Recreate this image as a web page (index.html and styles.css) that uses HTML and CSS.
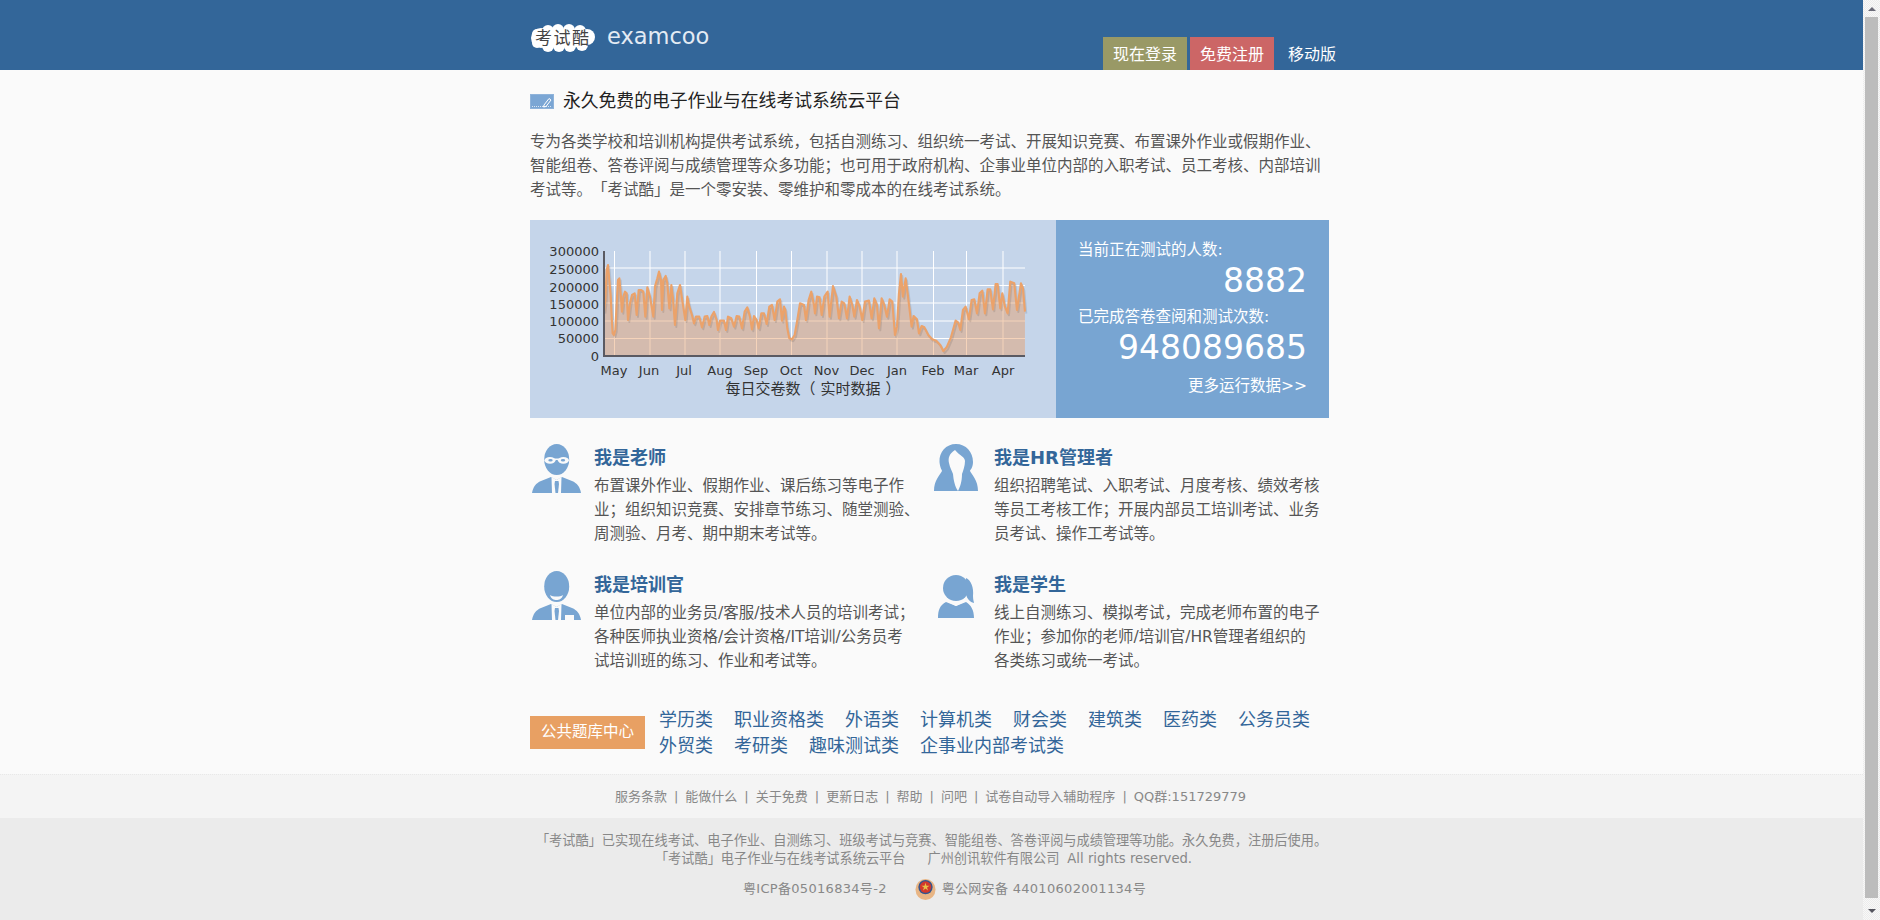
FILE: index.html
```html
<!DOCTYPE html>
<html lang="zh-CN">
<head>
    <meta charset="UTF-8">
    <title>考试酷 examcoo</title>
    <link rel="stylesheet" href="styles.css">
</head>
<body>
<div class="page">
    <div class="header">
        <div class="container header-inner">
            <a class="logo">
                <svg class="logo-cloud" viewBox="0 0 66 30">
                    <g fill="#fff">
                        <circle cx="11" cy="15" r="10"/>
                        <circle cx="7" cy="11" r="5"/>
                        <circle cx="7" cy="20" r="5"/>
                        <circle cx="18" cy="8" r="6"/>
                        <circle cx="28" cy="7" r="6"/>
                        <circle cx="39" cy="7" r="6"/>
                        <circle cx="50" cy="8" r="6"/>
                        <circle cx="57" cy="14" r="8"/>
                        <circle cx="52" cy="22" r="6"/>
                        <circle cx="40" cy="23" r="6"/>
                        <circle cx="29" cy="23" r="6"/>
                        <circle cx="18" cy="23" r="6"/>
                        <rect x="10" y="8" width="46" height="16"/>
                    </g>
                    <text class="logo-cloud-text" x="5" y="21">考试酷</text>
                </svg>
                <span class="logo-text">examcoo</span>
            </a>
            <div class="nav">
                <a class="nav-btn nav-login">现在登录</a>
                <a class="nav-btn nav-reg">免费注册</a>
                <a class="nav-btn">移动版</a>
            </div>
        </div>
    </div>

    <div class="container">
        <div class="title-row">
            <svg class="title-icon" viewBox="0 0 24 15">
                <rect x="0.5" y="0.5" width="23" height="14" fill="#7ba6d4" stroke="#8fb3da"/>
                <path d="M2 12.5H21" stroke="#dbe6f3" stroke-dasharray="1 1" fill="none"/>
                <path d="M14 11l5-6.5 2 1.5-5 6.5-2.5.5z" fill="none" stroke="#fff"/>
            </svg>
            <h1 class="title">永久免费的电子作业与在线考试系统云平台</h1>
        </div>
        <p class="intro">专为各类学校和培训机构提供考试系统，包括自测练习、组织统一考试、开展知识竞赛、布置课外作业或假期作业、智能组卷、答卷评阅与成绩管理等众多功能；也可用于政府机构、企事业单位内部的入职考试、员工考核、内部培训考试等。「考试酷」是一个零安装、零维护和零成本的在线考试系统。</p>

        <div class="stats">
            <div class="stats-chart">
                <svg class="chart" viewBox="530 220 526 198">
                    <!-- grid -->
                    <g stroke="#fff" stroke-width="1">
                        <path d="M603 268H1025M603 285.5H1025M603 303H1025M603 321H1025M603 338.5H1025"/>
                        <path d="M614.5 251V356M650 251V356M685 251V356M720 251V356M756.5 251V356M791.5 251V356M827 251V356M862 251V356M897 251V356M933.5 251V356M966.5 251V356M1003 251V356"/>
                    </g>
                    <!-- 曲线按 3 倍坐标描的 -->
                    <g transform="translate(600 250) scale(0.3333)">
                        <polygon fill="#e89a60" fill-opacity="0.43" points="12,318 12,185 16,150 20,60 24,45 28,90 32,135 35,200 38,250 42,255 46,240 50,160 54,90 58,85 62,130 66,185 70,140 75,125 80,130 84,210 90,160 96,135 104,130 110,195 116,120 124,120 130,125 136,200 142,112 150,140 160,200 165,110 172,85 177,65 183,90 186,180 190,90 197,78 202,100 208,175 214,105 219,145 225,225 232,130 240,105 246,145 256,210 262,140 268,170 276,195 282,220 288,200 298,200 306,232 314,200 322,198 328,225 334,200 342,186 350,210 354,240 360,212 372,212 378,240 384,200 394,205 402,230 410,198 418,200 426,235 434,185 442,172 450,200 456,238 462,198 470,210 476,235 484,190 492,190 500,222 508,170 516,165 524,210 532,155 540,148 546,212 552,170 556,180 562,235 568,265 576,268 584,255 592,210 600,160 612,165 618,210 626,150 634,125 642,165 645,190 651,140 659,142 665,195 673,140 683,125 689,200 699,108 709,140 717,205 725,155 733,160 741,205 749,140 757,165 763,200 771,150 779,170 787,210 795,155 807,152 815,205 823,145 831,165 837,235 845,145 853,165 861,200 869,148 877,155 885,255 891,230 897,130 903,72 909,140 917,85 923,130 935,230 941,198 951,208 957,250 965,228 973,232 985,255 997,268 1009,272 1021,285 1030,303 1040,292 1053,262 1067,212 1075,218 1081,240 1089,180 1097,170 1107,208 1115,150 1123,148 1131,190 1139,130 1147,122 1155,190 1163,118 1171,118 1179,178 1187,102 1193,102 1201,175 1207,130 1215,170 1223,190 1231,95 1243,100 1251,180 1263,100 1269,115 1275,185 1275,318"/>
                        <defs>
                            <polyline id="curve" fill="none" stroke-linejoin="round" points="12,185 16,150 20,60 24,45 28,90 32,135 35,200 38,250 42,255 46,240 50,160 54,90 58,85 62,130 66,185 70,140 75,125 80,130 84,210 90,160 96,135 104,130 110,195 116,120 124,120 130,125 136,200 142,112 150,140 160,200 165,110 172,85 177,65 183,90 186,180 190,90 197,78 202,100 208,175 214,105 219,145 225,225 232,130 240,105 246,145 256,210 262,140 268,170 276,195 282,220 288,200 298,200 306,232 314,200 322,198 328,225 334,200 342,186 350,210 354,240 360,212 372,212 378,240 384,200 394,205 402,230 410,198 418,200 426,235 434,185 442,172 450,200 456,238 462,198 470,210 476,235 484,190 492,190 500,222 508,170 516,165 524,210 532,155 540,148 546,212 552,170 556,180 562,235 568,265 576,268 584,255 592,210 600,160 612,165 618,210 626,150 634,125 642,165 645,190 651,140 659,142 665,195 673,140 683,125 689,200 699,108 709,140 717,205 725,155 733,160 741,205 749,140 757,165 763,200 771,150 779,170 787,210 795,155 807,152 815,205 823,145 831,165 837,235 845,145 853,165 861,200 869,148 877,155 885,255 891,230 897,130 903,72 909,140 917,85 923,130 935,230 941,198 951,208 957,250 965,228 973,232 985,255 997,268 1009,272 1021,285 1030,303 1040,292 1053,262 1067,212 1075,218 1081,240 1089,180 1097,170 1107,208 1115,150 1123,148 1131,190 1139,130 1147,122 1155,190 1163,118 1171,118 1179,178 1187,102 1193,102 1201,175 1207,130 1215,170 1223,190 1231,95 1243,100 1251,180 1263,100 1269,115 1275,185"/>
                        </defs>
                        <use href="#curve" x="4" y="6" stroke="#000" stroke-opacity="0.1" stroke-width="6"/>
                        <use href="#curve" stroke="#eba26a" stroke-width="6.500"/>
                    </g>
                    <!-- axis -->
                    <path d="M604 251V356H1025" fill="none" stroke="#5a5a62" stroke-width="2"/>
                    <g class="chart-label" text-anchor="end">
                        <text x="599" y="256">300000</text>
                        <text x="599" y="274">250000</text>
                        <text x="599" y="292">200000</text>
                        <text x="599" y="309">150000</text>
                        <text x="599" y="326">100000</text>
                        <text x="599" y="343">50000</text>
                        <text x="599" y="361">0</text>
                    </g>
                    <g class="chart-label" text-anchor="middle">
                        <text x="614" y="375">May</text>
                        <text x="649" y="375">Jun</text>
                        <text x="684" y="375">Jul</text>
                        <text x="720" y="375">Aug</text>
                        <text x="756" y="375">Sep</text>
                        <text x="791" y="375">Oct</text>
                        <text x="826.5" y="375">Nov</text>
                        <text x="862" y="375">Dec</text>
                        <text x="897" y="375">Jan</text>
                        <text x="933" y="375">Feb</text>
                        <text x="966" y="375">Mar</text>
                        <text x="1003" y="375">Apr</text>
                        <text class="chart-title" x="813" y="394">每日交卷数（<tspan dx="5">实时数据</tspan><tspan dx="5">）</tspan></text>
                    </g>
                </svg>
            </div>
            <div class="stats-side">
                <div class="stats-label">当前正在测试的人数:</div>
                <div class="stats-num">8882</div>
                <div class="stats-label stats-label2">已完成答卷查阅和测试次数:</div>
                <div class="stats-num">948089685</div>
                <a class="stats-more">更多运行数据&gt;&gt;</a>
            </div>
        </div>

        <div class="roles">
            <div class="role">
                <div class="role-pic">
                    <svg class="icon-teacher" viewBox="0 0 49 49">
                        <ellipse cx="24.7" cy="15.5" rx="12.5" ry="15.5" fill="#78a5d2"/>
                        <path d="M0 49C1 43 4 39 9 37L19 33 24.5 36 30 33 40 37C45 39 48 43 49 49Z" fill="#78a5d2"/>
                        <path d="M19.5 33L24.5 36 29.5 33 29 49H20Z" fill="#fafafa"/>
                        <path d="M23 37H26.5L27 40 26 49H23.5L22.5 40Z" fill="#78a5d2"/>
                        <g fill="#fafafa">
                            <ellipse cx="18" cy="16.300" rx="5.500" ry="3.400"/>
                            <ellipse cx="31.400" cy="16.300" rx="5.500" ry="3.400"/>
                            <rect x="22" y="14.500" width="5.500" height="1.500"/>
                        </g>
                        <ellipse cx="18.500" cy="16.300" rx="2.200" ry="1.300" fill="#78a5d2"/>
                        <ellipse cx="31" cy="16.300" rx="2.200" ry="1.300" fill="#78a5d2"/>
                    </svg>
                </div>
                <div class="role-body">
                    <h3 class="role-name">我是老师</h3>
                    <p class="role-desc">布置课外作业、假期作业、课后练习等电子作业；组织知识竞赛、安排章节练习、随堂测验、周测验、月考、期中期末考试等。</p>
                </div>
            </div>
            <div class="role">
                <div class="role-pic role-pic-right">
                    <svg class="icon-hr" viewBox="0 0 44 47">
                        <path d="M22 0C32 0 39 8 39 18 39 24 36 26 36 27 38 31 44 36 44 47H0C0 36 6 31 8 27 8 26 6 24 5.5 18 5 8 12 0 22 0Z" fill="#78a5d2"/>
                        <path d="M21 6C15 10 14 14 15 19 16 24 18 27 19 30 19.500 36 21 43 24 47 26 43 28 38 28 30 29 27 31 22 31 17 31 13 26 12 21 6Z" fill="#fafafa"/>
                    </svg>
                </div>
                <div class="role-body">
                    <h3 class="role-name">我是HR管理者</h3>
                    <p class="role-desc">组织招聘笔试、入职考试、月度考核、绩效考核等员工考核工作；开展内部员工培训考试、业务员考试、操作工考试等。</p>
                </div>
            </div>
            <div class="role">
                <div class="role-pic">
                    <svg class="icon-teacher" viewBox="0 0 49 49">
                        <ellipse cx="24.7" cy="15.5" rx="12.5" ry="15.5" fill="#78a5d2"/>
                        <path d="M0 49C1 43 4 39 9 37L19 33 24.5 36 30 33 40 37C45 39 48 43 49 49Z" fill="#78a5d2"/>
                        <path d="M19.5 33L24.5 36 29.5 33 29 49H20Z" fill="#fafafa"/>
                        <path d="M23 37H26.5L27 40 26 49H23.500L22.5 40Z" fill="#78a5d2"/>
                        <path d="M18 24C21 26 28 26 31 24 30 28 27 29 24.500 29 22 29 19 28 18 24Z" fill="#fafafa"/>
                        <rect x="33" y="44" width="9" height="5" fill="#fafafa"/>
                    </svg>
                </div>
                <div class="role-body">
                    <h3 class="role-name">我是培训官</h3>
                    <p class="role-desc">单位内部的业务员/客服/技术人员的培训考试；各种医师执业资格/会计资格/IT培训/公务员考<br>试培训班的练习、作业和考试等。</p>
                </div>
            </div>
            <div class="role">
                <div class="role-pic role-pic-right">
                    <svg class="icon-student" viewBox="0 0 36 44">
                        <circle cx="18" cy="14" r="13" fill="#78a5d2"/>
                        <path d="M28 4C33 6 36 14 35 22 35 26 36 28 36 29 32 28 29 25 28 20Z" fill="#78a5d2"/>
                        <path d="M0 44C0 36 2 31 8 28L18 32 28 28C33 31 36 36 36 44Z" fill="#78a5d2"/>
                        <path d="M10 27L18 31 26 27" fill="none" stroke="#fafafa" stroke-width="1.800"/>
                    </svg>
                </div>
                <div class="role-body">
                    <h3 class="role-name">我是学生</h3>
                    <p class="role-desc">线上自测练习、模拟考试，完成老师布置的电子作业；参加你的老师/培训官/HR管理者组织的<br>各类练习或统一考试。</p>
                </div>
            </div>
        </div>

        <div class="bank">
            <a class="bank-btn">公共题库中心</a>
            <div class="bank-links">
                <a>学历类</a><a>职业资格类</a><a>外语类</a><a>计算机类</a><a>财会类</a><a>建筑类</a><a>医药类</a><a>公务员类</a>
                <a>外贸类</a><a>考研类</a><a>趣味测试类</a><a>企事业内部考试类</a>
            </div>
        </div>
    </div>

    <div class="foot-links">
        <a>服务条款</a><span class="sep">|</span><a>能做什么</a><span class="sep">|</span><a>关于免费</a><span class="sep">|</span><a>更新日志</a><span class="sep">|</span><a>帮助</a><span class="sep">|</span><a>问吧</a><span class="sep">|</span><a>试卷自动导入辅助程序</a><span class="sep">|</span><a>QQ群:151729779</a>
    </div>
    <div class="foot">
        <div class="foot-line">「考试酷」已实现在线考试、电子作业、自测练习、班级考试与竞赛、智能组卷、答卷评阅与成绩管理等功能。永久免费，注册后使用。</div>
        <div class="foot-line foot-line2"><span>「考试酷」电子作业与在线考试系统云平台</span><span class="foot-company">广州创讯软件有限公司</span><span class="foot-rights">All rights reserved.</span></div>
        <div class="foot-icp">
            <a>粤ICP备05016834号-2</a>
            <svg class="emblem" viewBox="0 0 22 23">
                <ellipse cx="11" cy="12" rx="10.500" ry="11" fill="#e8b584"/>
                <circle cx="11" cy="9.500" r="7.500" fill="#33558f"/>
                <circle cx="11" cy="9.500" r="6" fill="#d2382c"/>
                <path d="M11 5L12 8H15.200L12.600 9.800 13.600 13 11 11 8.400 13 9.400 9.800 6.800 8H10Z" fill="#e8c14a"/>
            </svg>
            <a class="foot-police">粤公网安备 44010602001134号</a>
        </div>
    </div>
</div>
<div class="scrollbar">
    <div class="scroll-btn"><i class="arrow-up"></i></div>
    <div class="scroll-thumb"></div>
    <div class="scroll-btn scroll-btn-down"><i class="arrow-down"></i></div>
</div>
</body>
</html>
```

FILE: styles.css
```css
body {
    display: flex;
    height: 100vh;
    margin: 0;
    overflow: hidden;
    background-color: #fafafa;
    font-family: "DejaVu Sans", "Noto Sans CJK SC", sans-serif;
    color: #555;
    text-spacing-trim: space-all;
}

h1, h3, p {
    margin: 0;
    font-weight: normal;
}

.page {
    flex: 1;
    min-width: 0;
}

.container {
    width: 803px;
    margin: 0 auto;
}

/* header */
.header {
    height: 70px;
    background-color: #336699;
}

.header-inner {
    display: flex;
    height: 70px;
}

.logo {
    flex: none;
    display: flex;
    align-items: flex-start;
    width: 573px;
    padding-top: 23px;
    box-sizing: border-box;
}

.logo-cloud {
    width: 66px;
    height: 30px;
}

.logo-cloud-text {
    font-size: 17px;
    letter-spacing: 1.5px;
    fill: #444;
}

.logo-text {
    margin-left: 11px;
    font-size: 22.5px;
    line-height: 26px;
    color: #e3ebf4;
}

.nav {
    flex: none;
    display: flex;
    align-items: flex-end;
    gap: 3px;
    white-space: nowrap;
}

.nav-btn {
    height: 33px;
    padding: 0 10px;
    font-size: 16px;
    line-height: 35px;
    color: #fff;
}

.nav-login {
    background-color: #999966;
}

.nav-reg {
    background-color: #cc6666;
}

.nav-btn:last-child {
    padding-left: 11px;
}

/* intro */
.title-row {
    display: flex;
    align-items: center;
    height: 24px;
    padding-top: 19px;
}

.title-icon {
    width: 24px;
    height: 15px;
    margin-right: 9px;
}

.title {
    font-size: 17.8px;
    line-height: 24px;
    color: #222;
}

.intro {
    width: 800px;
    margin-top: 17px;
    font-size: 15.5px;
    line-height: 24px;
}

/* stats */
.stats {
    display: flex;
    width: 799px;
    height: 198px;
    margin-top: 18px;
}

.stats-chart {
    width: 526px;
    background-color: #c5d5ea;
}

.chart {
    display: block;
    width: 526px;
    height: 198px;
}

.chart-label {
    font-size: 13px;
    fill: #333;
}

.chart-title {
    font-size: 15px;
}

.stats-side {
    flex: 1;
    box-sizing: border-box;
    padding: 19px 22px 0 22px;
    background-color: #78a5d2;
    color: #fff;
}

.stats-label {
    font-size: 15.5px;
    line-height: 22px;
}

.stats-label2 {
    margin-top: 6px;
}

.stats-num {
    margin-top: 1px;
    font-size: 33px;
    line-height: 38px;
    text-align: right;
}

.stats-more {
    display: block;
    margin-top: 8px;
    font-size: 15.5px;
    line-height: 22px;
    text-align: right;
}

/* roles */
.roles {
    display: grid;
    grid-template-columns: 400px 1fr;
    row-gap: 26px;
    margin-top: 27px;
}

.role {
    display: flex;
}

.role-pic {
    flex: none;
    width: 64px;
    padding-left: 2px;
    box-sizing: border-box;
}

.role-pic-right {
    width: 64px;
    padding-left: 4px;
}

.icon-teacher {
    display: block;
    width: 49px;
    height: 49px;
    margin-top: -1px;
}

.icon-hr {
    display: block;
    width: 44px;
    height: 47px;
    margin-top: -1px;
}

.icon-student {
    display: block;
    width: 36px;
    height: 44px;
    margin: 2px 0 0 4px;
}

.role-body {
    width: 330px;
}

.role-name {
    height: 24px;
    font-size: 18px;
    line-height: 26px;
    font-weight: bold;
    color: #336699;
}

.role-desc {
    margin-top: 5px;
    font-size: 15.5px;
    line-height: 24px;
}

/* question bank */
.bank {
    display: flex;
    align-items: center;
    margin-top: 32px;
    margin-bottom: 15px;
}

.bank-btn {
    flex: none;
    width: 115px;
    height: 33px;
    font-size: 15.5px;
    line-height: 33px;
    text-align: center;
    color: #fff;
    background-color: #e8a063;
}

.bank-links {
    display: flex;
    flex-wrap: wrap;
    width: 680px;
    margin-left: 14px;
    padding-top: 2px;
    font-size: 18px;
    line-height: 26px;
    color: #336699;
}

.bank-links a {
    margin-right: 21px;
}

/* footer */
.foot-links {
    height: 44px;
    box-sizing: border-box;
    border-top: 1px dotted #e8e8e8;
    padding-right: 2px;
    background-color: #f4f4f4;
    font-size: 13px;
    line-height: 44px;
    text-align: center;
    color: #888;
}

.sep {
    margin: 0 7px;
}

.foot {
    height: 102px;
    box-sizing: border-box;
    padding-top: 14px;
    background-color: #ebebeb;
    font-size: 13.2px;
    line-height: 18px;
    text-align: center;
    color: #888;
}

.foot-line2 {
    padding-right: 16px;
}

.foot-company {
    margin-left: 22px;
}

.foot-rights {
    margin-left: 8px;
}

.foot-icp {
    display: flex;
    justify-content: center;
    align-items: center;
    height: 22px;
    margin-top: 10px;
    padding-left: 26px;
    font-size: 13px;
    letter-spacing: 0.3px;
}

.emblem {
    width: 21px;
    height: 22px;
    margin: 0 6px 0 28px;
}

/* scrollbar */
.scrollbar {
    flex: none;
    display: flex;
    flex-direction: column;
    width: 17px;
    background: repeating-conic-gradient(#ececec 0 25%, #f8f8f8 0 50%) 0 0 / 2px 2px;
}

.scroll-btn {
    display: flex;
    justify-content: center;
    align-items: center;
    height: 17px;
}

.scroll-btn-down {
    height: 22px;
    padding-top: 4px;
    box-sizing: border-box;
}

.scroll-thumb {
    height: 881px;
    margin: 0 2px;
    background-color: #bcbcbc;
}

.arrow-up {
    border-left: 4px solid transparent;
    border-right: 4px solid transparent;
    border-bottom: 4px solid #6b6b78;
}

.arrow-down {
    border-left: 4px solid transparent;
    border-right: 4px solid transparent;
    border-top: 4px solid #55555f;
}
```
